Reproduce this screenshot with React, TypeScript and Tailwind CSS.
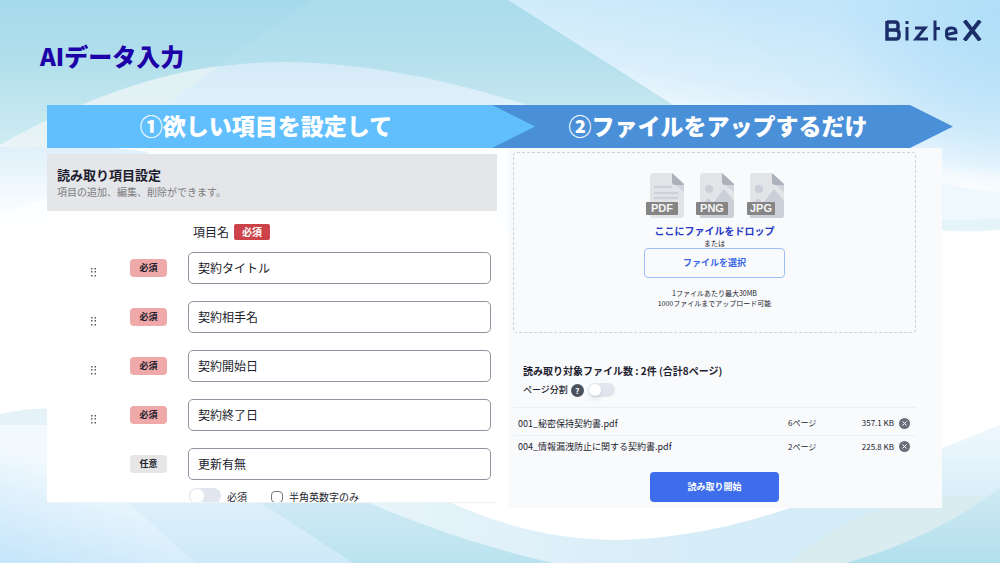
import { useState } from "react";

const fields = [
    { label: "必須", name: "契約タイトル", required: true },
    { label: "必須", name: "契約相手名", required: true },
    { label: "必須", name: "契約開始日", required: true },
    { label: "必須", name: "契約終了日", required: true },
    { label: "任意", name: "更新有無", required: false },
];

const files = [
    { name: "001_秘密保持契約書.pdf", pages: "6ページ", size: "357.1 KB" },
    { name: "004_情報漏洩防止に関する契約書.pdf", pages: "2ページ", size: "225.8 KB" },
];

const Background: React.FC = () => (
    <svg className="absolute inset-0 -z-10 h-full w-full" viewBox="0 0 1000 563" preserveAspectRatio="none" aria-hidden="true">
        <defs>
            <linearGradient id="sky" gradientUnits="userSpaceOnUse" x1="0" y1="0" x2="0" y2="215">
                <stop offset="0" stopColor="#a5daeb" />
                <stop offset="0.3" stopColor="#b2dfec" />
                <stop offset="0.65" stopColor="#cdebf2" />
                <stop offset="1" stopColor="#ffffff" />
            </linearGradient>
            <linearGradient id="skyRight" gradientUnits="userSpaceOnUse" x1="800" y1="0" x2="772" y2="155">
                <stop offset="0" stopColor="#c3e6fa" />
                <stop offset="0.6" stopColor="#daeffb" />
                <stop offset="1" stopColor="#fafdff" />
            </linearGradient>
            <radialGradient id="skyCorner" gradientUnits="userSpaceOnUse" cx="1000" cy="10" r="170">
                <stop offset="0" stopColor="#b0def8" />
                <stop offset="1" stopColor="#b0def8" stopOpacity="0" />
            </radialGradient>
            <linearGradient id="hill" gradientUnits="userSpaceOnUse" x1="0" y1="62" x2="0" y2="152">
                <stop offset="0" stopColor="#d3eaf7" />
                <stop offset="0.5" stopColor="#e0f1fb" />
                <stop offset="1" stopColor="#fcfeff" />
            </linearGradient>
            <linearGradient id="leftWave" gradientUnits="userSpaceOnUse" x1="0" y1="146" x2="0" y2="212">
                <stop offset="0" stopColor="#dff0fa" />
                <stop offset="1" stopColor="#fafdff" />
            </linearGradient>
            <linearGradient id="low" gradientUnits="userSpaceOnUse" x1="60" y1="450" x2="30" y2="563">
                <stop offset="0" stopColor="#f6fbfe" />
                <stop offset="1" stopColor="#c7e6fa" />
            </linearGradient>
            <linearGradient id="lowMid" gradientUnits="userSpaceOnUse" x1="0" y1="490" x2="0" y2="563">
                <stop offset="0" stopColor="#e0f1fb" />
                <stop offset="1" stopColor="#cee9f8" />
            </linearGradient>
            <linearGradient id="lowTeal" gradientUnits="userSpaceOnUse" x1="0" y1="500" x2="0" y2="563">
                <stop offset="0" stopColor="#d0eaf5" />
                <stop offset="1" stopColor="#b9e3ef" />
            </linearGradient>
            <linearGradient id="lowPale" gradientUnits="userSpaceOnUse" x1="360" y1="0" x2="700" y2="0">
                <stop offset="0" stopColor="#e8f5fa" />
                <stop offset="1" stopColor="#d6ecf8" />
            </linearGradient>
            <linearGradient id="rightWave" gradientUnits="userSpaceOnUse" x1="0" y1="425" x2="0" y2="510">
                <stop offset="0" stopColor="#f0f8fd" />
                <stop offset="1" stopColor="#d4ecf7" />
            </linearGradient>
            <linearGradient id="rightTeal" gradientUnits="userSpaceOnUse" x1="0" y1="488" x2="0" y2="563">
                <stop offset="0" stopColor="#cfeaf3" />
                <stop offset="1" stopColor="#b3dfed" />
            </linearGradient>
        </defs>
        <rect width="1000" height="563" fill="url(#sky)" />
        <path d="M310 0H508L672 105H165Z" fill="#ffffff" opacity="0.06" />
        <path d="M508 0H1000V230H870Z" fill="url(#skyRight)" />
        <path d="M708 0H1000V170H880L820 105Z" fill="#bfe4f9" opacity="0.08" />
        <path d="M830 0H1000V180H830Z" fill="url(#skyCorner)" />
        <path d="M0 145Q150 60 290 62 400 64 527 105V230H0Z" fill="url(#hill)" />
        <path d="M0 145Q120 78 220 66L165 105 60 148Q25 149 0 145Z" fill="#e3f1f2" opacity="0.8" />
        <path d="M0 146Q25 149 90 145L150 152 60 194 0 214Z" fill="url(#leftWave)" />
        <path d="M920 176Q960 190 1000 192V228Q960 233 920 228Z" fill="#eff8fc" />
        <path d="M920 218Q960 222 1000 218V230Q960 234 920 228Z" fill="#dff2f7" opacity="0.7" />

        <path d="M0 414Q25 408 60 408V430H0Z" fill="#e5f3f9" />
        <path d="M0 425H60L360 502 450 563H0Z" fill="#f1f9fd" />
        <path d="M0 452Q70 462 127 502L195 563H0Z" fill="url(#low)" />
        <path d="M127 502H262L353 563H195Z" fill="url(#lowMid)" />
        <path d="M260 502H368Q460 542 560 563H353Z" fill="url(#lowTeal)" />
        <path d="M368 502H450Q530 540 620 540 700 538 790 508H900V563H553Q460 542 368 502Z" fill="url(#lowPale)" />
        <path d="M790 508 942 448 1000 425V563H788Z" fill="url(#rightWave)" />
        <path d="M788 563Q850 515 885 508 950 490 1000 498V563Z" fill="#d9edf1" />
        <path d="M845 563Q930 540 1000 488V563Z" fill="url(#rightTeal)" />
    </svg>
);

const Logo: React.FC = () => (
    <svg className="h-[21px] w-[97px]" viewBox="0 0 97 21" fill="none" stroke="#1b2e69" strokeWidth="3" role="img" aria-label="BizteX">
        <path d="M2 2H10Q13 2 13 5V7.500Q13 10 10 10H2M10 10Q14 10 14 13V16Q14 19 11 19H2V1" strokeWidth="3.500" />
        <path d="M22 7V20.500M22 1V4M30 8H40L31 19H43M50 0.500V20.500M50 8.500H55" />
        <path d="M62 14.500 71 12.500Q71 8 67 8H66Q61.500 8 61.500 12V15Q61.500 19 66 19H72" />
        <path d="M79.500 0.500 95 20.500M95 0.500 79.500 20.500" strokeWidth="4" />
    </svg>
);

const FileIcon: React.FC<{ type: string }> = ({ type }) => (
    <svg className="h-[45px] w-[38px]" viewBox="0 0 38 45" role="img" aria-label={type}>
        <path d="M7 0H26L38 11V42Q38 45 35 45H7Q4 45 4 42V3Q4 0 7 0Z" fill="#e2e4e7" />
        {type === "PDF" ? (
            <path d="M9 14H25M9 20H31M9 25H31" stroke="#cdd2da" strokeWidth="2.500" strokeLinecap="round" />
        ) : (
            <g fill="#cacfd8">
                <circle cx="13" cy="16" r="4" />
                <path d="M4 34 12 25 17 30 28 16 38 28V42Q38 45 35 45H4Z" />
            </g>
        )}
        <path d="M26 9 38 11V19Z" fill="#cfd4dc" />
        <path d="M26 0 38 11V12H29Q26 12 26 9Z" fill="#adb2ba" />
        <rect x={type === "JPG" ? 1 : 0} y="29" width={type === "JPG" ? 28 : 32} height="13" rx="1" fill="#858585" />
        <text x={type === "JPG" ? 15 : 16} y="39" textAnchor="middle" fill="#f5f5f5" fontSize="11" fontWeight="bold" fontFamily="Liberation Sans, sans-serif">{type}</text>
    </svg>
);

const Handle: React.FC = () => (
    <svg className="mt-[9px] h-[9px] w-[7px]" viewBox="0 0 7 9" fill="#5a5c64" aria-hidden="true">
        {[0, 3, 7].map((y) => (
            <g key={y}>
                <rect x="1" y={y} width="1.500" height="1.500" />
                <rect x="4.500" y={y} width="1.500" height="1.500" />
            </g>
        ))}
    </svg>
);

const FieldSettings: React.FC = () => (
    <section className="mt-[6px] bg-white">
        <div className="bg-[#e5e6ea] px-[10px] pt-3 pb-[11px]">
            <h2 className="text-[13px] leading-[18px] font-bold">読み取り項目設定</h2>
            <p className="text-[10px] leading-4 text-[#7b7b7b]">項目の追加、編集、削除ができます。</p>
        </div>

        <div className="flex items-center gap-[5px] pt-[13px] pb-3 pl-[146px] leading-4">
            <span className="text-[12px]">項目名</span>
            <span className="rounded-xs bg-[#cb4248] px-2 text-[10px] font-bold text-white">必須</span>
        </div>

        <div className="flex flex-col gap-[17px] pr-[6px]">
            {fields.map((field) => (
                <div key={field.name} className="flex items-center">
                    <div className="flex w-[83px] justify-center pl-[9px]">
                        {field.required && <Handle />}
                    </div>
                    <span className={`w-[37px] rounded-sm text-center text-[9px] leading-[18px] font-bold ${field.required ? "bg-[#f0a9a9]" : "bg-[#e6e6e6]"}`}>
                        {field.label}
                    </span>
                    <input
                        aria-label={field.name}
                        defaultValue={field.name}
                        className="ml-[21px] h-8 min-w-0 flex-1 rounded-[5px] border border-[#9193a0] bg-white px-[9px] pb-px text-[12px]"
                    />
                </div>
            ))}
        </div>

        <div className="mt-2 flex h-[15px] items-start overflow-hidden border-b border-[#f1f2f4] pl-[142px] text-[10px] leading-[18px]">
            <label className="flex items-start gap-[6px]">
                <input type="checkbox" role="switch" className="peer sr-only" />
                <span className="h-4 w-8 rounded-full bg-[#e1e5ed] p-px">
                    <span className="block size-[14px] rounded-full bg-white" />
                </span>
                必須
            </label>
            <label className="ml-6 flex items-start gap-[6px]">
                <input type="checkbox" className="mt-[3px] size-3 appearance-none rounded-sm border border-[#777985] bg-white" />
                半角英数字のみ
            </label>
        </div>
    </section>
);

const Upload: React.FC = () => {
    const [split, setSplit] = useState(false);

    return (
        <section className="bg-[#f9fafc] pt-1 pr-[26px] pb-[6px] pl-[5px]">
            <div className="flex flex-col items-center rounded-sm border border-dashed border-[#cfd1d5] pt-5 pb-6">
                <div className="flex gap-3">
                    <FileIcon type="PDF" />
                    <FileIcon type="PNG" />
                    <FileIcon type="JPG" />
                </div>
                <p className="mt-[6px] text-[10px] leading-[14px] font-bold text-[#2438c4]">ここにファイルをドロップ</p>
                <p className="text-[7px] leading-[10px]">または</p>
                <button className="h-[30px] w-[141px] rounded-sm border border-[#a3bdf9] text-[9px] font-bold text-[#3b68e6]">ファイルを選択</button>
                <p className="mt-[10px] text-center text-[7px] leading-[10px]">
                    1ファイルあたり最大30MB
                    <br />
                    1000ファイルまでアップロード可能
                </p>
            </div>

            <div className="mt-[30px] pb-[9px] pl-[10px]">
                <h2 className="text-[10px] leading-[15px] font-bold">読み取り対象ファイル数 : 2件 (合計8ページ)</h2>
                <div className="mt-1 flex items-center text-[9px] leading-4 font-medium">
                    <label htmlFor="split">ページ分割</label>
                    <button aria-label="ヘルプ" className="ml-[3px] size-[13px] rounded-full bg-[#4b515c] text-[8px] leading-[13px] font-bold text-white">?</button>
                    <button
                        id="split"
                        role="switch"
                        aria-checked={split}
                        onClick={() => setSplit(!split)}
                        className="ml-1 flex h-[14px] w-[27px] items-center rounded-full bg-[#e1e5ed] p-px"
                    >
                        <span className={`size-3 rounded-full bg-white shadow-md ${split ? "ml-auto" : ""}`} />
                    </button>
                </div>
            </div>

            <div className="border-t border-[#eceef1] pt-1">
                <table className="w-full text-[8px]">
                    <tbody>
                        {files.map((file) => (
                            <tr key={file.name} className="h-[23px] border-b border-[#f0f1f4] last:border-b-0">
                                <td className="pl-[5px] text-[9px]">{file.name}</td>
                                <td className="w-[60px]">{file.pages}</td>
                                <td className="w-[46px] text-right">{file.size}</td>
                                <td className="w-[22px] pl-[5px]">
                                    <button aria-label="削除" className="flex size-[11px] items-center justify-center rounded-full bg-[#6a6f7a]">
                                        <svg className="size-[5px]" viewBox="0 0 5 5" stroke="#fff" aria-hidden="true">
                                            <path d="M.5.5 4.500 4.500M4.500.5.5 4.500" />
                                        </svg>
                                    </button>
                                </td>
                            </tr>
                        ))}
                    </tbody>
                </table>
            </div>

            <div className="mt-[14px] flex justify-center">
                <button className="h-[30px] w-[129px] rounded-sm bg-[#3d6deb] text-[9px] font-bold text-white">読み取り開始</button>
            </div>
        </section>
    );
};

const App: React.FC = () => {
    return (
        <main className="relative isolate min-h-screen overflow-hidden font-['Noto_Sans_CJK_JP',sans-serif] text-[#1c1d2e]">
            <Background />

            <header className="flex items-start justify-between pt-5 pr-[18px] pl-10">
                <h1 className="mt-[18px] text-[24px] leading-9 font-black text-[#1d00a8]">AIデータ入力</h1>
                <Logo />
            </header>

            <div className="mx-[47px] mt-[31px] grid grid-cols-[445fr_461fr] text-center text-[23px] leading-10 font-black text-white">
                <div className="z-10 -mr-[43px] bg-[#61bffd] pr-[50px] pb-[3px] [clip-path:polygon(0_0,calc(100%-43px)_0,100%_50%,calc(100%-43px)_100%,0_100%)]">①欲しい項目を設定して</div>
                <div className="bg-[#4a90d9] pr-[9px] pb-[3px] [clip-path:polygon(0_0,calc(100%-43px)_0,100%_50%,calc(100%-43px)_100%,0_100%)]">②ファイルをアップするだけ</div>
            </div>

            <div className="mr-[58px] ml-[47px] grid grid-cols-[450fr_434fr] items-start gap-[11px]">
                <FieldSettings />
                <Upload />
            </div>
        </main>
    );
};

export default App;
